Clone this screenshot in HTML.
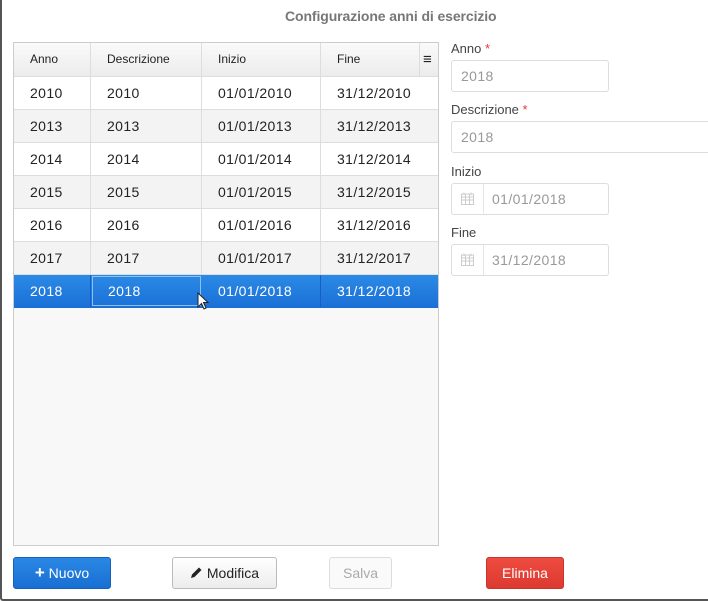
<!DOCTYPE html>
<html><head><style>
*{box-sizing:border-box;margin:0;padding:0}
body{width:708px;height:601px;background:#fff;font-family:"Liberation Sans",sans-serif;position:relative;overflow:hidden;color:#222}
.frame{position:absolute;left:0;top:0;width:710px;height:601px;border-left:2px solid #555;border-bottom:2px solid #555;border-bottom-left-radius:3px}
.title{position:absolute;top:8px;left:285px;font-size:14px;font-weight:bold;color:#777;letter-spacing:-0.1px}
.grid{position:absolute;left:13px;top:42px;width:426px;height:504px;border:1px solid #ccc;background:#f8f8f8}
.row{position:absolute;left:0;width:424px;height:33px;border-bottom:1px solid #ddd;font-size:14px;letter-spacing:0.4px}
.row div{position:absolute;top:0;height:32px;line-height:32px;border-right:1px solid #ddd;padding-left:16px}
.c1{left:0;width:77px}.c2{left:77px;width:111px}.c3{left:188px;width:119px}.c4{left:307px;width:117px;border-right:none!important}
.hdr{top:0;height:34px;background:linear-gradient(#fafafa,#ececec);font-size:12px;letter-spacing:0}
.hdr div{height:33px;line-height:33px}
.w{background:#fff}.g{background:#f3f3f3}
.sel{background:linear-gradient(#2b8ae6,#1a6fd6);color:#fff;border-bottom:none}
.sel div{border-right-color:#1560c0}
label{position:absolute;left:451px;font-size:13px;color:#444}
label b{color:#e33;font-weight:normal}
.inp{position:absolute;left:451px;height:32px;border:1px solid #ddd;border-radius:3px;font-size:14px;letter-spacing:0.4px;color:#999;line-height:30px;padding-left:9px}
.inp.d{padding-left:40px}
.inp .ic{position:absolute;left:0;top:0;width:32px;height:30px;border-right:1px solid #e6e6e6}
.btn{position:absolute;top:557px;height:32px;border-radius:3px;font-size:14px;line-height:30px;text-align:center}
</style></head><body>
<div class="frame"></div>
<div class="title">Configurazione anni di esercizio</div>
<div class="grid">
<div class="row hdr"><div class="c1">Anno</div><div class="c2">Descrizione</div><div class="c3">Inizio</div><div class="c4">Fine</div><div style="left:405px;width:19px;border-left:1px solid #ddd;border-right:none;padding-left:3px;font-size:15px;font-weight:bold">≡</div></div>
<div class="row w" style="top:34px"><div class="c1">2010</div><div class="c2">2010</div><div class="c3">01/01/2010</div><div class="c4">31/12/2010</div></div>
<div class="row g" style="top:67px"><div class="c1">2013</div><div class="c2">2013</div><div class="c3">01/01/2013</div><div class="c4">31/12/2013</div></div>
<div class="row w" style="top:100px"><div class="c1">2014</div><div class="c2">2014</div><div class="c3">01/01/2014</div><div class="c4">31/12/2014</div></div>
<div class="row g" style="top:133px"><div class="c1">2015</div><div class="c2">2015</div><div class="c3">01/01/2015</div><div class="c4">31/12/2015</div></div>
<div class="row w" style="top:166px"><div class="c1">2016</div><div class="c2">2016</div><div class="c3">01/01/2016</div><div class="c4">31/12/2016</div></div>
<div class="row g" style="top:199px"><div class="c1">2017</div><div class="c2">2017</div><div class="c3">01/01/2017</div><div class="c4">31/12/2017</div></div>
<div class="row sel" style="top:232px"><div class="c1">2018</div><div class="c2" style="border:1px solid #8cc0f0;height:30px;line-height:28px;top:1px;left:78px;width:109px;padding-left:15px">2018</div><div class="c3">01/01/2018</div><div class="c4">31/12/2018</div></div>
</div>
<svg style="position:absolute;left:197px;top:292px" width="14" height="20" viewBox="0 0 14 20"><path d="M1 1 L1 15 L4.5 11.5 L7 17 L9 16 L6.5 10.5 L11 10.5 Z" fill="#fff" stroke="#222" stroke-width="1"/></svg>
<label style="top:41px">Anno <b>*</b></label>
<div class="inp" style="top:60px;width:158px">2018</div>
<label style="top:102px">Descrizione <b>*</b></label>
<div class="inp" style="top:121px;width:270px">2018</div>
<label style="top:164px">Inizio</label>
<div class="inp d" style="top:183px;width:158px"><span class="ic"><svg style="position:absolute;left:9px;top:8px" width="13" height="13" viewBox="0 0 13 13"><rect x="0.5" y="2" width="12" height="10.5" fill="none" stroke="#ccc"/><path d="M0.5 5h12M0.5 8h12M4.5 2v10.5M8.5 2v10.5M3 0.5v2.5M10 0.5v2.5" stroke="#ccc"/></svg></span>01/01/2018</div>
<label style="top:225px">Fine</label>
<div class="inp d" style="top:244px;width:158px"><span class="ic"><svg style="position:absolute;left:9px;top:8px" width="13" height="13" viewBox="0 0 13 13"><rect x="0.5" y="2" width="12" height="10.5" fill="none" stroke="#ccc"/><path d="M0.5 5h12M0.5 8h12M4.5 2v10.5M8.5 2v10.5M3 0.5v2.5M10 0.5v2.5" stroke="#ccc"/></svg></span>31/12/2018</div>
<div class="btn" style="left:13px;width:98px;background:linear-gradient(#2a88e4,#196fd3);border:1px solid #1860b8;color:#fff"><b style="font-size:17px">+</b> Nuovo</div>
<div class="btn" style="left:172px;width:105px;background:linear-gradient(#fff,#ececec);border:1px solid #bbb;color:#222"><svg width="13" height="13" viewBox="0 0 13 13" style="vertical-align:-1px"><path d="M1 12 L2 8.5 L9 1.5 L11.5 4 L4.5 11 Z" fill="#222"/></svg> Modifica</div>
<div class="btn" style="left:329px;width:63px;background:#fafafa;border:1px solid #ddd;color:#aaa">Salva</div>
<div class="btn" style="left:486px;width:78px;background:linear-gradient(#ef4b40,#dc3a30);border:1px solid #c7352c;color:#fff">Elimina</div>
</body></html>
